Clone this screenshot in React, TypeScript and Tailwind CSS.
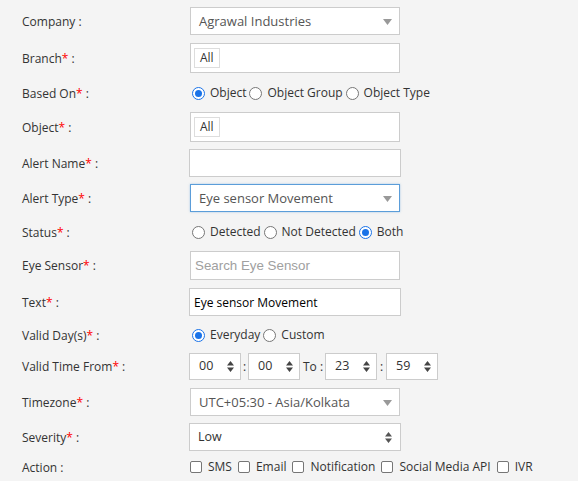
import type { ReactNode } from "react";

const font = { fontFamily: '"Open Sans", "Noto Sans", sans-serif' };

function Req() {
  return <span className="text-[#ff0000]">*</span>;
}

function Row({ label, req, className, children }: { label: string; req?: boolean; className: string; children: ReactNode }) {
  return (
    <div className={`flex items-center ${className}`}>
      <div className="w-[167px] shrink-0 pt-px text-[12px] text-[#333]">
        {label}
        {req && <Req />} :
      </div>
      {children}
    </div>
  );
}

function Caret() {
  return (
    <svg width="9" height="6" viewBox="0 0 9 6" className="shrink-0">
      <path d="M0 0h9L4.5 6z" fill="#999" />
    </svg>
  );
}

function Spin({ color = "#444" }: { color?: string }) {
  return (
    <svg width="7" height="11" viewBox="0 0 7 11" className="shrink-0">
      <path d="M0 4.5h7L3.5 0z M0 6.5h7L3.5 11z" fill={color} />
    </svg>
  );
}

function Radio({ checked }: { checked?: boolean }) {
  return checked ? (
    <span className="ml-[3px] mr-[5px] flex h-[13px] w-[13px] shrink-0 items-center justify-center rounded-full border border-[#1a73e8] bg-white">
      <span className="h-[7px] w-[7px] rounded-full bg-[#1a73e8]" />
    </span>
  ) : (
    <span className="ml-[3px] mr-[5px] h-[13px] w-[13px] shrink-0 rounded-full border border-[#767676] bg-white" />
  );
}

function Check() {
  return <span className="ml-px mr-[6px] h-[12px] w-[12px] shrink-0 rounded-[2px] border border-[#767676] bg-white" />;
}

function Tag() {
  return <span className="ml-[3px] flex h-[20px] items-center border border-[#ddd] px-[5px] text-[12px] text-[#333]">All</span>;
}

function Select({ value, focus }: { value: string; focus?: boolean }) {
  return (
    <div
      className={`ml-px flex h-full w-[210px] items-center justify-between border bg-white pl-[8px] pr-[7px] pt-px text-[13px] text-[#555] ${
        focus ? "border-[#5b9dd9] shadow-[0_0_2px_rgba(91,157,217,0.5)]" : "border-[#ccc]"
      }`}
    >
      <span>{value}</span>
      <Caret />
    </div>
  );
}

function TimeBox({ value }: { value: string }) {
  return (
    <div className="flex h-full w-[52px] items-center justify-between border border-[#ccc] bg-white pl-[9px] pr-[6px] text-[12.5px] text-[#333]">
      <span>{value}</span>
      <Spin />
    </div>
  );
}

export default function App() {
  return (
    <div className="min-h-[481px] w-[578px] bg-[#f4f4f4] pl-[22px] pt-[7px]" style={font}>
      <Row label="Company" className="h-[28px]">
        <Select value="Agrawal Industries" />
      </Row>
      <Row label="Branch" req className="mt-[8px] h-[30px]">
        <div className="ml-px flex h-full w-[210px] items-center border border-[#ccc] bg-white">
          <Tag />
        </div>
      </Row>
      <Row label="Based On" req className="mt-[8px] h-[24px]">
        <div className="flex items-center text-[12px] text-[#333]">
          <Radio checked />
          Object
          <Radio />
          Object Group
          <Radio />
          Object Type
        </div>
      </Row>
      <Row label="Object" req className="mt-[7px] h-[30px]">
        <div className="ml-px flex h-full w-[210px] items-center border border-[#ccc] bg-white">
          <Tag />
        </div>
      </Row>
      <Row label="Alert Name" req className="mt-[7px] h-[28px]">
        <div className="h-full w-[212px] border border-[#ccc] bg-white" />
      </Row>
      <Row label="Alert Type" req className="mt-[7px] h-[28px]">
        <Select value="Eye sensor Movement" focus />
      </Row>
      <Row label="Status" req className="mt-[8px] h-[24px]">
        <div className="flex items-center text-[12px] text-[#333]">
          <Radio />
          Detected
          <Radio />
          Not Detected
          <Radio checked />
          Both
        </div>
      </Row>
      <Row label="Eye Sensor" req className="mt-[7px] h-[29px]">
        <div
          className="ml-px flex h-full w-[210px] items-center border border-[#ccc] bg-white pl-[4px] text-[13.33px] text-[#a0a0a0]"
          style={{ fontFamily: '"Liberation Sans", Arial, sans-serif' }}
        >
          Search Eye Sensor
        </div>
      </Row>
      <Row label="Text" req className="mt-[8px] h-[28px]">
        <div className="flex h-full w-[212px] items-center border border-[#ccc] bg-white pl-[4px] pt-px text-[12px] text-black">
          Eye sensor Movement
        </div>
      </Row>
      <Row label="Valid Day(s)" req className="mt-[7px] h-[24px]">
        <div className="flex items-center text-[12px] text-[#333]">
          <Radio checked />
          Everyday
          <Radio />
          Custom
        </div>
      </Row>
      <Row label="Valid Time From" req className="mt-[6px] h-[27px]">
        <div className="flex h-full items-center text-[12px] text-[#333]">
          <TimeBox value="00" />
          <span className="w-[7px] text-center">:</span>
          <TimeBox value="00" />
          <span className="w-[25px] pl-[3px]">To :</span>
          <TimeBox value="23" />
          <span className="w-[9px] text-center">:</span>
          <TimeBox value="59" />
        </div>
      </Row>
      <Row label="Timezone" req className="mt-[8px] h-[28px]">
        <Select value="UTC+05:30 - Asia/Kolkata" />
      </Row>
      <Row label="Severity" req className="mt-[7px] h-[28px]">
        <div className="flex h-full w-[212px] items-center justify-between border border-[#ccc] bg-white pl-[8px] pr-[8px] pt-px text-[12.5px] text-[#333]">
          <span>Low</span>
          <Spin color="#555" />
        </div>
      </Row>
      <Row label="Action" className="mt-[4px] h-[24px]">
        <div className="flex items-center text-[12px] text-[#333]">
          <Check />
          <span className="mr-[5px]">SMS</span>
          <Check />
          <span className="mr-[5px]">Email</span>
          <Check />
          <span className="mr-[5px]">Notification</span>
          <Check />
          <span className="mr-[5px]">Social Media API</span>
          <Check />
          <span>IVR</span>
        </div>
      </Row>
    </div>
  );
}
